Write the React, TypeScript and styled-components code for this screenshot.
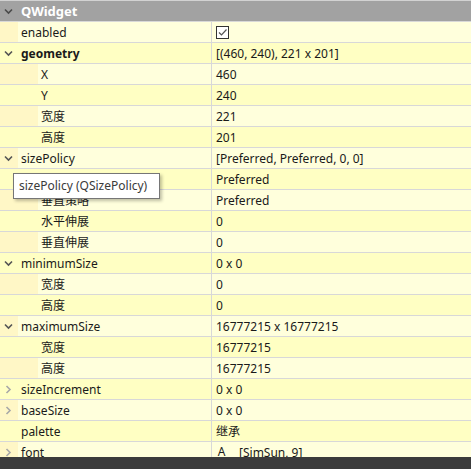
import React, { FC } from "react";
import styled, { createGlobalStyle } from "styled-components";

type Row = {
  label: string;
  value?: string;
  level: 0 | 1;
  expand?: "open" | "closed";
  bold?: boolean;
  kind?: "check" | "font";
};

const rows: Row[] = [
  { label: "enabled", level: 0, kind: "check" },
  { label: "geometry", value: "[(460, 240), 221 x 201]", level: 0, expand: "open", bold: true },
  { label: "X", value: "460", level: 1 },
  { label: "Y", value: "240", level: 1 },
  { label: "宽度", value: "221", level: 1 },
  { label: "高度", value: "201", level: 1 },
  { label: "sizePolicy", value: "[Preferred, Preferred, 0, 0]", level: 0, expand: "open" },
  { label: "水平策略", value: "Preferred", level: 1 },
  { label: "垂直策略", value: "Preferred", level: 1 },
  { label: "水平伸展", value: "0", level: 1 },
  { label: "垂直伸展", value: "0", level: 1 },
  { label: "minimumSize", value: "0 x 0", level: 0, expand: "open" },
  { label: "宽度", value: "0", level: 1 },
  { label: "高度", value: "0", level: 1 },
  { label: "maximumSize", value: "16777215 x 16777215", level: 0, expand: "open" },
  { label: "宽度", value: "16777215", level: 1 },
  { label: "高度", value: "16777215", level: 1 },
  { label: "sizeIncrement", value: "0 x 0", level: 0, expand: "closed" },
  { label: "baseSize", value: "0 x 0", level: 0, expand: "closed" },
  { label: "palette", value: "继承", level: 0 },
  { label: "font", value: "[SimSun, 9]", level: 0, expand: "closed", kind: "font" },
];

const GlobalStyle = createGlobalStyle`
  html, body {
    margin: 0;
    padding: 0;
    overflow: hidden;
  }
  body {
    font-family: "Noto Sans", "Noto Sans CJK SC", sans-serif;
    font-size: 12px;
    color: #1a1a1a;
  }
`;

const Chevron: FC<{ dir: "open" | "closed"; color: string }> = ({ dir, color }) => (
  <svg width="9" height="9" viewBox="0 0 9 9">
    {dir === "open" ? (
      <path d="M1 2.5 L4.5 6 L8 2.5" fill="none" stroke={color} strokeWidth="1.6" />
    ) : (
      <path d="M2.5 1 L6 4.5 L2.5 8" fill="none" stroke={color} strokeWidth="1.6" />
    )}
  </svg>
);

const Check: FC = () => (
  <CheckBox>
    <svg width="11" height="11" viewBox="0 0 11 11">
      <path d="M2 5.5 L4.5 8 L9.5 2.5" fill="none" stroke="#555" strokeWidth="1.2" />
    </svg>
  </CheckBox>
);

export default function App() {
  return (
    <>
      <GlobalStyle />
      <Page>
        <Table>
          <Header>
            <Branch $width={18}>
              <Chevron dir="open" color="#4a4a4a" />
            </Branch>
            <HeaderTitle>QWidget</HeaderTitle>
          </Header>
          {rows.map((r, i) => {
            const light = i % 2 === 0;
            return (
              <PropRow key={i} $light={light}>
                <NameCell>
                  <Branch $width={r.level === 0 ? 18 : 38} $shade={light}>
                    {r.expand && r.level === 0 && (
                      <Chevron
                        dir={r.expand}
                        color={r.expand === "open" ? "#555" : "#a8a8a8"}
                      />
                    )}
                  </Branch>
                  <Label $bold={r.bold}>{r.label}</Label>
                </NameCell>
                <Value>
                  {r.kind === "check" && <Check />}
                  {r.kind === "font" && <FontGlyph>A</FontGlyph>}
                  {r.value}
                </Value>
              </PropRow>
            );
          })}
          <Tooltip>sizePolicy (QSizePolicy)</Tooltip>
        </Table>
        <BottomBar />
      </Page>
    </>
  );
}

const Page = styled.div`
  height: 100vh;
  display: flex;
  flex-direction: column;
  background: #ffffdc;
`;

const Table = styled.div`
  position: relative;
  flex: 1;
  overflow: hidden;
  display: flex;
  flex-direction: column;
`;

const Header = styled.div`
  flex: none;
  height: 20px;
  display: flex;
  align-items: center;
  background: #a2a2a2;
  border-top: 1px solid #d2d2d2;
  border-bottom: 1px solid #d8d8d8;
`;

const HeaderTitle = styled.span`
  padding-left: 3px;
  color: #fff;
  font-weight: bold;
  font-size: 13px;
`;

const PropRow = styled.div<{ $light: boolean }>`
  flex: none;
  height: 20px;
  display: grid;
  grid-template-columns: 212px 1fr;
  background: ${(p) => (p.$light ? "#ffffdc" : "#ffffc3")};
  border-bottom: 1px solid #d8d8d8;
`;

const NameCell = styled.div`
  display: flex;
  align-items: stretch;
  min-width: 0;
  border-right: 1px solid #d8d8d8;
`;

const Branch = styled.div<{ $width: number; $shade?: boolean }>`
  flex: none;
  width: ${(p) => p.$width}px;
  display: flex;
  align-items: center;
  justify-content: center;
  padding-right: ${(p) => (p.$width > 20 ? 20 : 2)}px;
  box-sizing: border-box;
  background: ${(p) => (p.$shade ? "#fff7c6" : "transparent")};
`;

const Label = styled.div<{ $bold?: boolean }>`
  flex: 1;
  display: flex;
  align-items: center;
  padding-left: 3px;
  font-weight: ${(p) => (p.$bold ? "bold" : "normal")};
  white-space: nowrap;
  overflow: hidden;
`;

const Value = styled.div`
  display: flex;
  align-items: center;
  padding-left: 4px;
  white-space: nowrap;
  overflow: hidden;
`;

const CheckBox = styled.span`
  width: 11px;
  height: 11px;
  border: 1px solid #333;
  display: inline-flex;
  align-items: center;
  justify-content: center;
  background: #fff;
`;

const FontGlyph = styled.span`
  display: inline-block;
  width: 9px;
  margin: 0 13px 0 1px;
  text-align: center;
  border-bottom: 1px solid #1a1a1a;
  line-height: 12px;
`;

const Tooltip = styled.div`
  position: absolute;
  left: 13px;
  top: 173px;
  padding: 3px 12px 4px 5px;
  background: #fff;
  border: 1px solid #767676;
  color: #3a3a3a;
  box-shadow: 2px 2px 3px rgba(0, 0, 0, 0.25);
  white-space: nowrap;
`;

const BottomBar = styled.div`
  flex: none;
  height: 12px;
  background: #3b3b3b;
`;
